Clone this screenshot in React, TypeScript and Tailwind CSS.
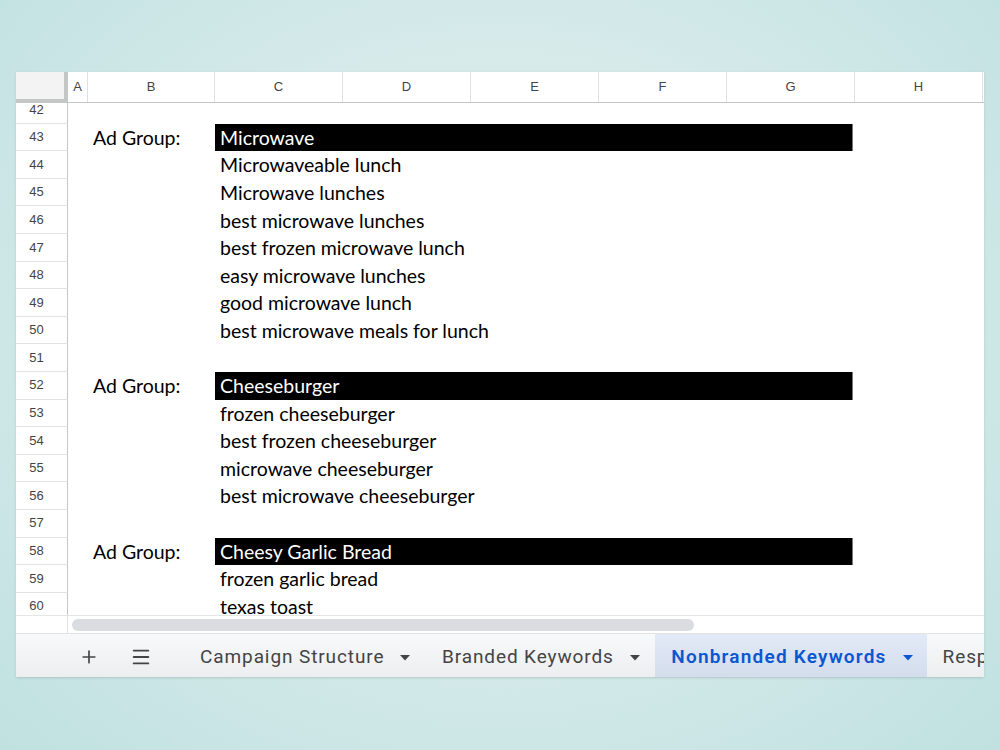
import React from "react";
import { Plus, Menu } from "lucide-react";

const cols = [
  { id: "A", w: "w-[20px]" },
  { id: "B", w: "w-[127px]" },
  { id: "C", w: "w-[128px]" },
  { id: "D", w: "w-[128px]" },
  { id: "E", w: "w-[128px]" },
  { id: "F", w: "w-[128px]" },
  { id: "G", w: "w-[128px]" },
  { id: "H", w: "w-[128px]" },
];

type Row = { n: number; group?: string; bar?: string; text?: string };

const rows: Row[] = [
  { n: 42 },
  { n: 43, group: "Ad Group:", bar: "Microwave" },
  { n: 44, text: "Microwaveable lunch" },
  { n: 45, text: "Microwave lunches" },
  { n: 46, text: "best microwave lunches" },
  { n: 47, text: "best frozen microwave lunch" },
  { n: 48, text: "easy microwave lunches" },
  { n: 49, text: "good microwave lunch" },
  { n: 50, text: "best microwave meals for lunch" },
  { n: 51 },
  { n: 52, group: "Ad Group:", bar: "Cheeseburger" },
  { n: 53, text: "frozen cheeseburger" },
  { n: 54, text: "best frozen cheeseburger" },
  { n: 55, text: "microwave cheeseburger" },
  { n: 56, text: "best microwave cheeseburger" },
  { n: 57 },
  { n: 58, group: "Ad Group:", bar: "Cheesy Garlic Bread" },
  { n: 59, text: "frozen garlic bread" },
  { n: 60, text: "texas toast" },
  { n: 61 },
];

const tabs = [
  { name: "Campaign Structure", active: false },
  { name: "Branded Keywords", active: false },
  { name: "Nonbranded Keywords", active: true },
];

const Caret = ({ className }: { className: string }) => (
  <svg viewBox="0 0 10 6" className={className}>
    <path d="M0 0h10L5 5.5z" fill="currentColor" />
  </svg>
);

export default function App() {
  return (
    <div className="w-[1000px] h-[750px] overflow-hidden bg-radial-[at_50%_45%] from-[#e4efee] via-[#d6eaea] to-[#bfe1e0] pt-[72px] pl-[16px]">
      <div className="w-[968px] h-[605px] bg-white flex flex-col overflow-hidden shadow-sm">
        {/* column headers */}
        <div className="flex h-[31px] shrink-0 border-b border-[#c4c7c5] font-['Liberation_Sans',sans-serif] text-[13px] text-[#444]">
          <div className="w-[52px] bg-[#f3f3f3] border-r-[4px] border-b-[3px] border-[#c4c7c5]"></div>
          {cols.map((c) => (
            <div
              key={c.id}
              className={`${c.w} shrink-0 flex items-center justify-center border-r border-[#e0e0e0]`}
            >
              {c.id}
            </div>
          ))}
        </div>

        {/* grid body */}
        <div className="h-[512px] shrink-0 overflow-hidden">
          <div className="-mt-[7px] font-['Lato',sans-serif] text-[19.5px] text-black">
            {rows.map((r) => (
              <div key={r.n} className="flex h-[27.6px]">
                <div className="w-[52px] shrink-0 flex items-center justify-center pr-[10px] border-r border-b border-r-[#c4c7c5] border-b-[#e2e2e2] font-['Liberation_Sans',sans-serif] text-[13px] text-[#444]">
                  {r.n}
                </div>
                <div className="w-[20px] shrink-0"></div>
                <div className="w-[127px] shrink-0 flex items-center pl-[5px] whitespace-nowrap">
                  {r.group}
                </div>
                {r.bar ? (
                  <div className="w-[638px] shrink-0 flex items-center bg-black text-white pl-[5px] border-r border-[#777]">
                    {r.bar}
                  </div>
                ) : (
                  <div className="flex items-center pl-[5px] whitespace-nowrap">
                    {r.text}
                  </div>
                )}
              </div>
            ))}
          </div>
        </div>

        {/* horizontal scrollbar */}
        <div className="h-[18px] shrink-0 flex border-t border-[#e6e6e6]">
          <div className="w-[52px] shrink-0 border-r border-[#e0e0e0]"></div>
          <div className="flex-1 flex items-center pl-[4px]">
            <div className="w-[622px] h-[12px] rounded-full bg-[#dadce0]"></div>
          </div>
        </div>

        {/* sheet tabs */}
        <div className="h-[44px] shrink-0 flex items-stretch bg-linear-to-b from-[#f8f9fa] to-[#eceef0] border-t border-[#e3e3e3] font-['Roboto',sans-serif] text-[19px] text-[#444] whitespace-nowrap">
          <div className="w-[58px] shrink-0"></div>
          <div className="w-[30px] shrink-0 flex items-center justify-center pt-[3px]">
            <Plus className="w-[20px] h-[20px]" strokeWidth={2} />
          </div>
          <div className="w-[22px] shrink-0"></div>
          <div className="w-[30px] shrink-0 flex items-center justify-center pt-[3px]">
            <Menu className="w-[22px] h-[22px]" strokeWidth={2} />
          </div>
          <div className="w-[28px] shrink-0"></div>
          {tabs.map((t) => (
            <div
              key={t.name}
              className={
                t.active
                  ? "flex items-center gap-[16px] pl-[16px] pr-[14px] pt-[4px] bg-linear-to-b from-[#e2eaf8] to-[#d4ddec] text-[#0b57d0] font-semibold tracking-[1.2px]"
                  : "flex items-center gap-[16px] pl-[16px] pr-[15.5px] pt-[4px] tracking-[0.9px]"
              }
            >
              <span>{t.name}</span>
              <Caret className="w-[10px] h-[6px]" />
            </div>
          ))}
          <div className="flex items-center pl-[16px] pt-[4px] tracking-[0.9px]">Resp</div>
        </div>
      </div>
    </div>
  );
}
